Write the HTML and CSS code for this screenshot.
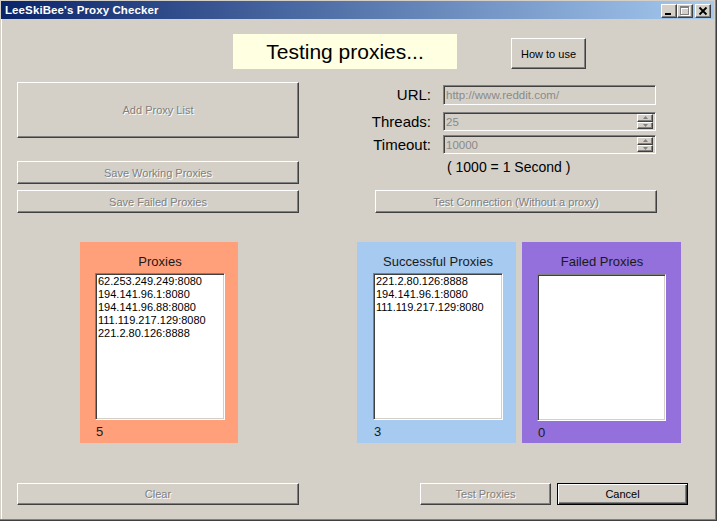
FILE: index.html
```html
<!DOCTYPE html>
<html>
<head>
<meta charset="utf-8">
<title>LeeSkiBee's Proxy Checker</title>
<link rel="stylesheet" href="styles.css">
</head>
<body>
<div class="window">
  <div class="titlebar">
    <span class="title">LeeSkiBee's Proxy Checker</span>
    <div class="controls">
      <span class="cbtn raised">
        <svg width="14" height="12" viewBox="0 0 14 12"><rect x="3" y="8" width="6" height="2" fill="#000"/></svg>
      </span>
      <span class="cbtn raised">
        <svg width="14" height="12" viewBox="0 0 14 12">
          <g fill="none" stroke="#fff" stroke-width="1" shape-rendering="crispEdges"><rect x="3.5" y="2.5" width="8" height="8"/><line x1="3" y1="3.5" x2="12" y2="3.5"/></g>
          <g fill="none" stroke="#808080" stroke-width="1" shape-rendering="crispEdges"><rect x="2.5" y="1.5" width="8" height="8"/><line x1="2" y1="2.5" x2="11" y2="2.5"/></g>
        </svg>
      </span>
      <span class="cbtn raised close">
        <svg width="14" height="12" viewBox="0 0 14 12"><path d="M3.5 2.5 L10.5 9.5 M10.5 2.5 L3.5 9.5" stroke="#000" stroke-width="1.8" fill="none"/></svg>
      </span>
    </div>
  </div>

  <div class="client">
    <div class="row-top">
      <div class="banner">Testing proxies...</div>
      <div class="btn raised howto">How to use</div>
    </div>

    <div class="row-mid">
      <div class="left-col">
        <div class="btn raised dis add">Add Proxy List</div>
        <div class="btn raised dis save-working">Save Working Proxies</div>
        <div class="btn raised dis save-failed">Save Failed Proxies</div>
      </div>
      <div class="right-col">
        <div class="frow url-row">
          <span class="flabel">URL:</span>
          <div class="field">http://www.reddit.com/</div>
        </div>
        <div class="frow threads-row">
          <span class="flabel">Threads:</span>
          <div class="field spin">
            <span class="val">25</span>
            <span class="spinner">
              <span class="sb raised"><svg width="5" height="3" viewBox="0 0 5 3"><path d="M2.5 0 L5 3 L0 3 Z" fill="#808080"/></svg></span>
              <span class="sb raised"><svg width="5" height="3" viewBox="0 0 5 3"><path d="M0 0 L5 0 L2.5 3 Z" fill="#808080"/></svg></span>
            </span>
          </div>
        </div>
        <div class="frow timeout-row">
          <span class="flabel">Timeout:</span>
          <div class="field spin">
            <span class="val">10000</span>
            <span class="spinner">
              <span class="sb raised"><svg width="5" height="3" viewBox="0 0 5 3"><path d="M2.5 0 L5 3 L0 3 Z" fill="#808080"/></svg></span>
              <span class="sb raised"><svg width="5" height="3" viewBox="0 0 5 3"><path d="M0 0 L5 0 L2.5 3 Z" fill="#808080"/></svg></span>
            </span>
          </div>
        </div>
        <div class="note">( 1000 = 1 Second )</div>
        <div class="btn raised dis test-conn">Test Connection (Without a proxy)</div>
      </div>
    </div>

    <div class="row-panels">
      <div class="panel proxies">
        <div class="ptitle">Proxies</div>
        <div class="listbox">
          <div>62.253.249.249:8080</div>
          <div>194.141.96.1:8080</div>
          <div>194.141.96.88:8080</div>
          <div>111.119.217.129:8080</div>
          <div>221.2.80.126:8888</div>
        </div>
        <div class="count">5</div>
      </div>
      <div class="panel success">
        <div class="ptitle">Successful Proxies</div>
        <div class="listbox">
          <div>221.2.80.126:8888</div>
          <div>194.141.96.1:8080</div>
          <div>111.119.217.129:8080</div>
        </div>
        <div class="count">3</div>
      </div>
      <div class="panel failed">
        <div class="ptitle">Failed Proxies</div>
        <div class="listbox"></div>
        <div class="count">0</div>
      </div>
    </div>

    <div class="row-bottom">
      <div class="btn raised dis clear">Clear</div>
      <div class="btn raised dis test-proxies">Test Proxies</div>
      <div class="btn default cancel">Cancel</div>
    </div>
  </div>
</div>
</body>
</html>
```

FILE: styles.css
```css
* { box-sizing: border-box; }
html, body { margin: 0; padding: 0; }
body {
  background: #d4d0c8;
  font-family: "Liberation Sans", Arial, sans-serif;
  font-size: 11px;
  color: #000;
}
.window {
  width: 717px;
  height: 521px;
  padding: 1px 3px 2px 1px;
  box-shadow: inset -1px -1px 0 #404040, inset -2px -2px 0 #808080;
  display: flex;
  flex-direction: column;
  overflow: hidden;
}
.titlebar {
  height: 18px;
  flex: none;
  display: flex;
  align-items: center;
  padding: 0 3px 0 4px;
  background: linear-gradient(to right, #0a246a, #a6caf0);
}
.title {
  color: #fff;
  font-weight: bold;
  font-size: 11.5px;
  letter-spacing: 0.1px;
}
.controls { margin-left: auto; display: flex; margin-top: 1px; }
.raised {
  background: #d4d0c8;
  border: 1px solid;
  border-color: #fff #404040 #404040 #fff;
  box-shadow: inset -1px -1px 0 #808080;
}
.cbtn {
  width: 16px;
  height: 14px;
  display: flex;
  align-items: center;
  justify-content: center;
}
.cbtn svg { display: block; }
.cbtn.close { margin-left: 2px; }

.client {
  flex: 1;
  border-left: 1px solid #fff;
  padding-left: 15px;
  display: flex;
  flex-direction: column;
}

.btn {
  display: flex;
  align-items: center;
  justify-content: center;
  font-size: 11px;
  white-space: nowrap;
}
.dis { color: #808080; text-shadow: 1px 1px 0 #fff; }

.row-top { display: flex; align-items: flex-start; margin-top: 15px; height: 35px; }
.banner {
  margin-left: 216px;
  width: 224px;
  height: 35px;
  background: #ffffe1;
  font-size: 21px;
  line-height: 35px;
  text-align: center;
  color: #000;
}
.howto { margin-left: 54px; margin-top: 4px; width: 75px; height: 31px; }

.row-mid { display: flex; margin-top: 13px; height: 131px; }
.left-col { width: 282px; display: flex; flex-direction: column; }
.add { height: 56px; }
.save-working { height: 23px; margin-top: 23px; }
.save-failed { height: 23px; margin-top: 6px; }

.right-col { margin-left: 61px; width: 297px; display: flex; flex-direction: column; }
.frow { display: flex; align-items: center; }
.flabel {
  width: 71px;
  text-align: right;
  font-size: 15px;
  line-height: 18px;
  white-space: nowrap;
}
.field {
  margin-left: 12px;
  width: 213px;
  border: 1px solid;
  border-color: #808080 #fff #fff #808080;
  box-shadow: inset 1px 1px 0 #404040, inset -1px -1px 0 #d4d0c8;
  background: #d4d0c8;
  color: #8a8a8a;
  font-size: 11.5px;
  padding-left: 2px;
  display: flex;
  align-items: center;
  white-space: nowrap;
}
.url-row { margin-top: 3px; }
.url-row .field { height: 20px; }
.threads-row { margin-top: 7px; }
.timeout-row { margin-top: 4px; }
.spin { height: 19px; padding: 1px 1px 1px 2px; }
.spin .val { flex: 1; }
.spinner { width: 16px; height: 15px; display: flex; flex-direction: column; margin-right: 1px; }
.sb {
  flex: 1;
  display: flex;
  align-items: center;
  justify-content: center;
}
.sb svg { display: block; }
.note {
  margin-top: 5px;
  padding-left: 87px;
  font-size: 14px;
  line-height: 16px;
}
.test-conn { margin-top: auto; margin-left: 15px; width: 282px; height: 23px; }

.row-panels { display: flex; margin-top: 29px; height: 201px; }
.panel { height: 201px; padding-left: 15px; }
.proxies { margin-left: 63px; width: 158px; background: #ffa07a; }
.success { margin-left: 119px; width: 159px; background: #a6caf0; padding-left: 16px; }
.failed { margin-left: 6px; width: 159px; background: #9370db; }
.ptitle {
  margin-top: 12px;
  width: 130px;
  text-align: center;
  font-size: 13px;
  line-height: 16px;
  color: #1a1a1a;
}
.listbox {
  margin-top: 3px;
  width: 130px;
  height: 147px;
  background: #fff;
  border: 1px solid;
  border-color: #808080 #fff #fff #808080;
  box-shadow: inset 1px 1px 0 #404040, inset -1px -1px 0 #d4d0c8;
  padding: 1px 0 0 2px;
  font-size: 11px;
  line-height: 13px;
  white-space: nowrap;
  overflow: hidden;
}
.failed .listbox { width: 129px; margin-top: 4px; }
.count {
  margin-top: 4px;
  padding-left: 1px;
  font-size: 13px;
  line-height: 16px;
  color: #1a1a1a;
}

.row-bottom { display: flex; margin-top: 40px; height: 22px; }
.clear { width: 282px; height: 22px; }
.test-proxies { margin-left: 121px; width: 131px; height: 22px; }
.default {
  margin-left: 6px;
  width: 131px;
  height: 22px;
  background: #d4d0c8;
  border: 1px solid #000;
  box-shadow: inset 1px 1px 0 #fff, inset -1px -1px 0 #404040, inset -2px -2px 0 #808080;
}
```
